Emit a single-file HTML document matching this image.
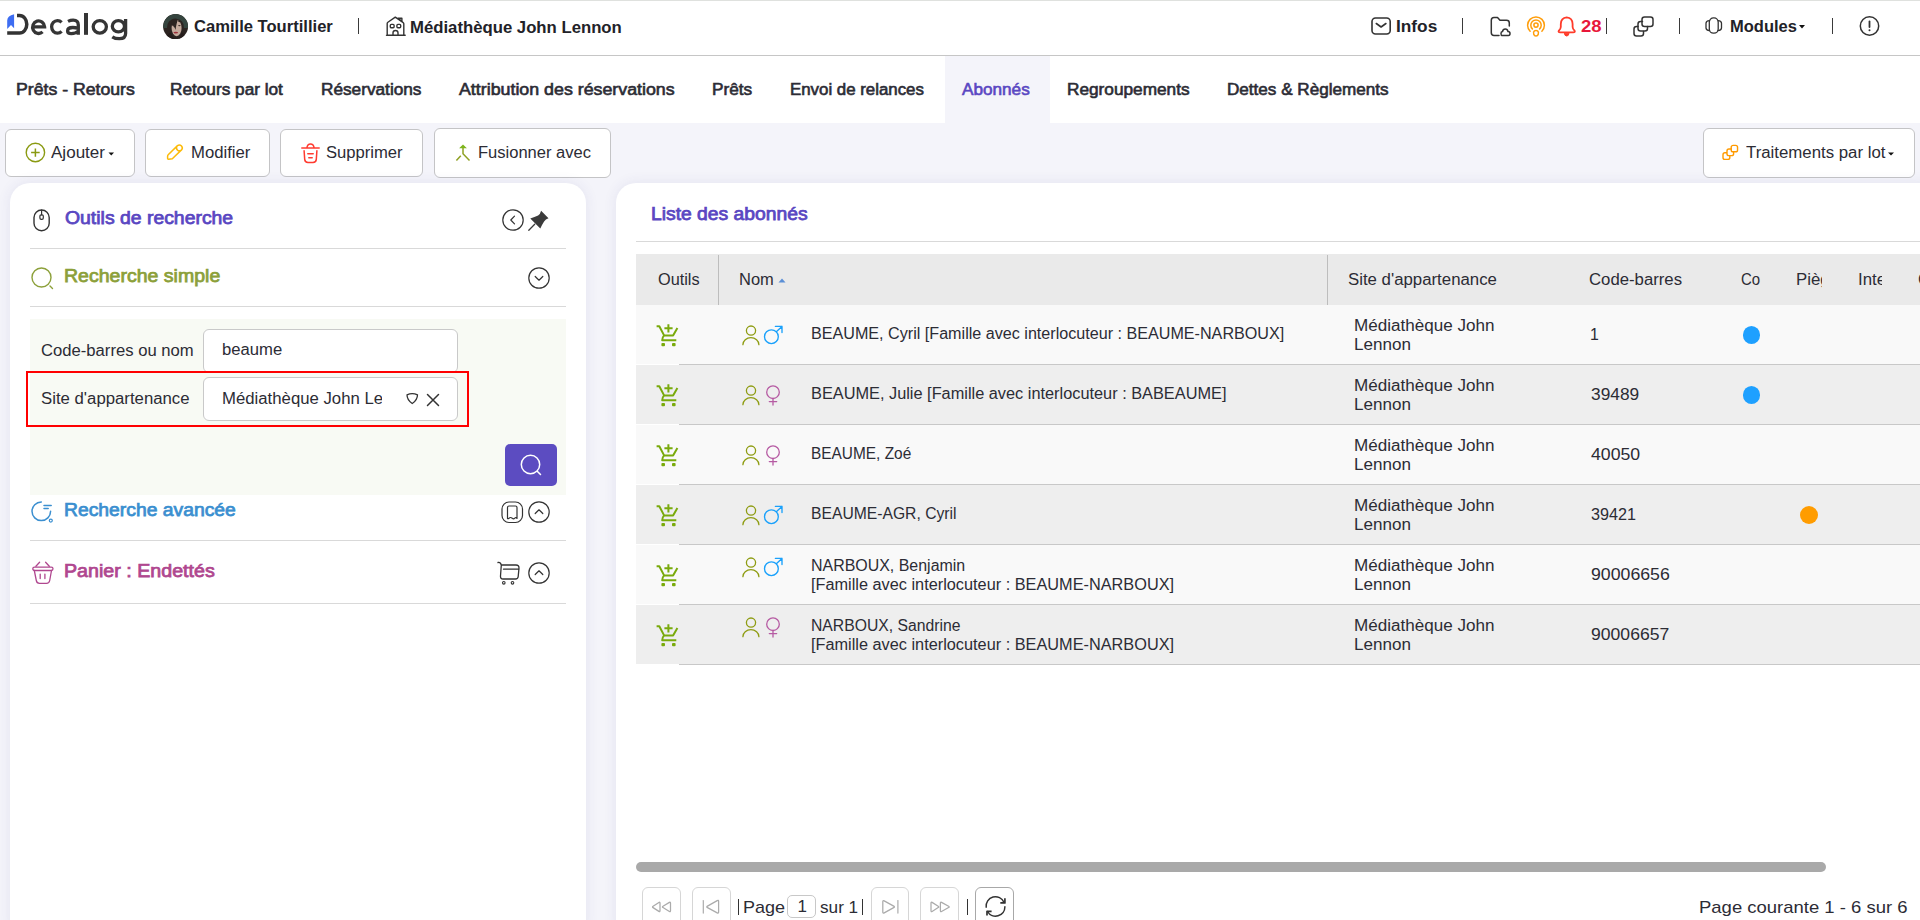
<!DOCTYPE html>
<html><head><meta charset="utf-8"><title>Abonnés</title><style>
*{margin:0;padding:0}
html,body{width:1920px;height:920px;overflow:hidden;background:#fff}
body{position:relative;font-family:"Liberation Sans",sans-serif}
.bx{position:absolute}
.ic{position:absolute;overflow:visible}
.t{position:absolute;white-space:nowrap;line-height:1;transform-origin:0 0}
.clip{position:absolute;overflow:hidden}
.nav{-webkit-text-stroke:0.6px currentColor}
.med{-webkit-text-stroke:0.75px currentColor}
</style></head><body>
<div class="bx" style="left:0px;top:0px;width:1920px;height:1px;background:#dfe1de"></div>
<div class="bx" style="left:0px;top:55px;width:1920px;height:1px;background:#c6c6c6"></div>
<div class="bx" style="left:0px;top:123px;width:1920px;height:797px;background:#f4f4fa"></div>
<div class="bx" style="left:945px;top:56px;width:105px;height:67px;background:#f4f4fa"></div>
<div class="bx" style="left:5px;top:129px;width:130px;height:48px;background:#fff;border:1px solid #c4c4c6;border-radius:6px;box-sizing:border-box"></div>
<div class="bx" style="left:145px;top:129px;width:125px;height:48px;background:#fff;border:1px solid #c4c4c6;border-radius:6px;box-sizing:border-box"></div>
<div class="bx" style="left:280px;top:129px;width:142.5px;height:48px;background:#fff;border:1px solid #c4c4c6;border-radius:6px;box-sizing:border-box"></div>
<div class="bx" style="left:433.5px;top:128px;width:177px;height:50px;background:#fff;border:1px solid #c4c4c6;border-radius:6px;box-sizing:border-box"></div>
<div class="bx" style="left:1702.5px;top:128px;width:212px;height:50px;background:#fff;border:1px solid #c4c4c6;border-radius:6px;box-sizing:border-box"></div>
<div class="bx" style="left:10px;top:183px;width:576px;height:760px;background:#fff;border-radius:20px;box-shadow:0 0 14px rgba(60,60,130,0.09)"></div>
<div class="bx" style="left:616px;top:183px;width:1324px;height:760px;background:#fff;border-radius:20px;box-shadow:0 0 14px rgba(60,60,130,0.09)"></div>
<div class="bx" style="left:30px;top:248px;width:536px;height:1px;background:#d9d9d9"></div>
<div class="bx" style="left:30px;top:306px;width:536px;height:1px;background:#d9d9d9"></div>
<div class="bx" style="left:30px;top:540px;width:536px;height:1px;background:#d9d9d9"></div>
<div class="bx" style="left:30px;top:603px;width:536px;height:1px;background:#d9d9d9"></div>
<div class="bx" style="left:30px;top:319px;width:536px;height:176px;background:#f8faf4"></div>
<div class="bx" style="left:203px;top:329px;width:255px;height:44px;background:#fff;border:1px solid #c9c9c9;border-radius:6px;box-sizing:border-box"></div>
<div class="bx" style="left:203px;top:377px;width:255px;height:44px;background:#fff;border:1px solid #c9c9c9;border-radius:6px;box-sizing:border-box"></div>
<div class="bx" style="left:26px;top:371px;width:443px;height:56px;border:2px solid #ff0000;box-sizing:border-box"></div>
<div class="bx" style="left:505px;top:444px;width:52px;height:42px;background:#5c4cc1;border-radius:5px"></div>
<div class="bx" style="left:636px;top:241px;width:1284px;height:1px;background:#d9d9d9"></div>
<div class="bx" style="left:636px;top:254px;width:1284px;height:51px;background:#eaeaea"></div>
<div class="bx" style="left:718px;top:255px;width:1px;height:50px;background:#bdbdbd"></div>
<div class="bx" style="left:1327px;top:255px;width:1px;height:50px;background:#bdbdbd"></div>
<div class="bx" style="left:636px;top:305px;width:1284px;height:59px;background:#f9f9f9"></div>
<div class="bx" style="left:679px;top:364px;width:1241px;height:1px;background:#c8c8c8"></div>
<div class="bx" style="left:636px;top:365px;width:1284px;height:59px;background:#eeeeee"></div>
<div class="bx" style="left:679px;top:424px;width:1241px;height:1px;background:#c8c8c8"></div>
<div class="bx" style="left:636px;top:425px;width:1284px;height:59px;background:#f9f9f9"></div>
<div class="bx" style="left:679px;top:484px;width:1241px;height:1px;background:#c8c8c8"></div>
<div class="bx" style="left:636px;top:485px;width:1284px;height:59px;background:#eeeeee"></div>
<div class="bx" style="left:679px;top:544px;width:1241px;height:1px;background:#c8c8c8"></div>
<div class="bx" style="left:636px;top:545px;width:1284px;height:59px;background:#f9f9f9"></div>
<div class="bx" style="left:679px;top:604px;width:1241px;height:1px;background:#c8c8c8"></div>
<div class="bx" style="left:636px;top:605px;width:1284px;height:59px;background:#eeeeee"></div>
<div class="bx" style="left:679px;top:664px;width:1241px;height:1px;background:#c8c8c8"></div>
<div class="bx" style="left:1742.7px;top:325.8px;width:17.8px;height:18px;background:#1ea0ff;border-radius:50%"></div>
<div class="bx" style="left:1742.7px;top:385.8px;width:17.8px;height:18px;background:#1ea0ff;border-radius:50%"></div>
<div class="bx" style="left:1800px;top:505.8px;width:18px;height:18px;background:#ff9c00;border-radius:50%"></div>
<div class="bx" style="left:636px;top:862px;width:1190px;height:10px;background:#a9a9a9;border-radius:5px"></div>
<div class="bx" style="left:641.5px;top:887.4px;width:39.2px;height:40px;background:#fff;border:1px solid #d6d6d6;border-radius:6px;box-sizing:border-box"></div>
<div class="bx" style="left:691.5px;top:887.4px;width:39px;height:40px;background:#fff;border:1px solid #d6d6d6;border-radius:6px;box-sizing:border-box"></div>
<div class="bx" style="left:870.7px;top:887.4px;width:38.5px;height:40px;background:#fff;border:1px solid #d6d6d6;border-radius:6px;box-sizing:border-box"></div>
<div class="bx" style="left:920.4px;top:887.4px;width:38.9px;height:40px;background:#fff;border:1px solid #d6d6d6;border-radius:6px;box-sizing:border-box"></div>
<div class="bx" style="left:975.1px;top:887.4px;width:39.3px;height:40px;background:#fff;border:1px solid #a8a8a8;border-radius:6px;box-sizing:border-box"></div>
<div class="bx" style="left:787.3px;top:895.3px;width:29.2px;height:23px;background:#fff;border:1px solid #c8c8c8;border-radius:5px;box-sizing:border-box"></div>
<div class="bx" style="left:737.8px;top:899px;width:1.3px;height:16px;background:#333"></div>
<div class="bx" style="left:861.8px;top:899px;width:1.3px;height:16px;background:#333"></div>
<div class="bx" style="left:967px;top:899px;width:1.3px;height:16px;background:#333"></div>
<div class="bx" style="left:357.7px;top:18px;width:1.3px;height:16px;background:#3a3a3a"></div>
<div class="bx" style="left:1462px;top:18px;width:1.3px;height:16px;background:#3a3a3a"></div>
<div class="bx" style="left:1606px;top:18px;width:1.3px;height:16px;background:#3a3a3a"></div>
<div class="bx" style="left:1678.8px;top:18px;width:1.3px;height:16px;background:#3a3a3a"></div>
<div class="bx" style="left:1831.8px;top:18px;width:1.3px;height:16px;background:#3a3a3a"></div>
<svg class="ic" style="left:0px;top:0px;width:140px;height:50px;" viewBox="0 0 140 50">
<path d="M7.2 28.9 V20.5 Q7.4 15.6 14.1 14.2 V28.2 L11 25.1 Z" fill="#3d6df2"/>
<path d="M17 15.4 H19.5 A7.3 8.85 0 0 1 19.5 33.1 H7.2" fill="none" stroke="#333" stroke-width="3.5"/>
<g fill="none" stroke="#353535" stroke-width="3.3">
<path d="M32.9 26.9 H44.6 A6 6.3 0 1 0 42.6 31.9"/>
<path d="M61.6 22.3 A5.9 6.3 0 1 0 61.6 31.4"/>
<path d="M68 21.4 Q70.5 20.1 73.2 20.1 Q78.3 20.1 78.3 25 V34.8 M78.3 28.3 Q75.5 27.5 72.8 27.5 Q67.6 27.5 67.6 30.9 Q67.6 33.6 71.3 33.6 Q76 33.6 78.3 31"/>
<ellipse cx="99.8" cy="26.85" rx="6.6" ry="6.3"/>
<ellipse cx="118.4" cy="26.2" rx="6.1" ry="5.6"/>
<path d="M125.6 18.9 V33.5 Q125.6 38.7 119.3 38.7 Q115 38.7 112.3 36.8"/>
</g>
<rect x="84" y="13" width="4" height="21.8" fill="#353535"/>
</svg>
<svg class="ic" style="left:162.8px;top:13.9px;width:25.2px;height:25.2px;" viewBox="0 0 25.2 25.2">
<defs><clipPath id="avc"><circle cx="12.6" cy="12.6" r="12.5"/></clipPath></defs>
<g clip-path="url(#avc)">
<rect width="25.2" height="25.2" fill="#2b2320"/>
<path d="M0 14 Q0 0 12.6 0 Q25.2 0 25.2 14 L21 14 Q21 5 12.6 5 Q4 5 4 14Z" fill="#34443e"/>
<ellipse cx="13.6" cy="14" rx="5" ry="8.2" fill="#c4aa9c"/>
<path d="M8.5 6 Q12 3.5 15 5.5 Q13.5 9 12.5 16 Q11.5 12 8.5 11Z" fill="#2b2320"/>
<path d="M15 6 Q17.5 6 19 9 Q17 8 15.5 8Z" fill="#2b2320"/>
<ellipse cx="10.6" cy="11.6" rx="1.3" ry="0.6" fill="#3a2e2a"/><ellipse cx="16.4" cy="11.6" rx="1.3" ry="0.6" fill="#3a2e2a"/>
<ellipse cx="12.8" cy="18.6" rx="2.3" ry="0.85" fill="#9e2f3a"/>
<path d="M3 25 Q6 16 8.6 20 Q10 24 12 25.2Z" fill="#241c1a"/><path d="M22 25 Q20 17 18.5 19 Q17 24 15 25.2Z" fill="#241c1a"/>
</g>
</svg>
<svg class="ic" style="left:385.5px;top:16px;width:20px;height:21px;" viewBox="0 0 20 21"><path d="M1.2 19.1 V7.6 Q1.2 6.8 1.9 6.3 L9.3 1.1 L16.9 6.3 Q17.8 6.9 17.8 7.7 V19.1 M0.5 19.2 H19.2" fill="none" stroke="#333" stroke-width="1.4" stroke-linecap="round" stroke-linejoin="round"/>
<path d="M11.9 2.3 H15.9 V5.2 Z" fill="none" stroke="#333" stroke-width="1.4" stroke-linecap="round" stroke-linejoin="round"/>
<rect x="4.3" y="8.4" width="3.8" height="3.3" rx="1" fill="none" stroke="#333" stroke-width="1.4" stroke-linecap="round" stroke-linejoin="round"/><rect x="10.9" y="8.4" width="3.8" height="3.3" rx="1" fill="none" stroke="#333" stroke-width="1.4" stroke-linecap="round" stroke-linejoin="round"/>
<path d="M7 19.1 V16.8 Q7 14.5 9.5 14.5 Q12 14.5 12 16.8 V19.1" fill="none" stroke="#333" stroke-width="1.4" stroke-linecap="round" stroke-linejoin="round"/></svg>
<svg class="ic" style="left:1370.5px;top:17px;width:21px;height:18px;" viewBox="0 0 21 18"><rect x="1" y="1" width="18.2" height="16" rx="3.5" fill="none" stroke="#333" stroke-width="1.6" stroke-linecap="round" stroke-linejoin="round"/><path d="M5.3 6.5 L10.1 10 L14.9 6.5" fill="none" stroke="#333" stroke-width="1.6" stroke-linecap="round" stroke-linejoin="round"/></svg>
<svg class="ic" style="left:1489.5px;top:15.5px;width:21px;height:21px;" viewBox="0 0 21 21"><path d="M9 19.5 H4 Q1.3 19.5 1.3 16.8 V4.3 Q1.3 1.5 4 1.5 H7.5 L10 4.3 H16.5 Q19.3 4.3 19.3 7 V10" fill="none" stroke="#333" stroke-width="1.5" stroke-linecap="round" stroke-linejoin="round"/><path d="M12 19.5 H18.5 Q20 19.5 20 17.5 Q20 15.5 18 15.5 Q17.5 13 15.3 13 Q13 13 12.5 15.5 Q11 15.7 11 17.5 Q11 19.5 12 19.5Z" fill="none" stroke="#333" stroke-width="1.5" stroke-linecap="round" stroke-linejoin="round"/></svg>
<svg class="ic" style="left:1526px;top:15.5px;width:20px;height:21px;" viewBox="0 0 20 21"><circle cx="10" cy="9.1" r="2.1" fill="none" stroke="#ff9e0c" stroke-width="1.5" stroke-linecap="round" stroke-linejoin="round"/><path d="M6.4 12.9 A5.2 5.2 0 1 1 13.6 12.9 M4.1 15.3 A8.4 8.4 0 1 1 15.9 15.3 M7.8 18.6 Q7 16 8.4 14.9 Q10 13.9 11.6 14.9 Q13 16 12.2 18.6 Q11.7 20 10 20 Q8.3 20 7.8 18.6Z" fill="none" stroke="#ff9e0c" stroke-width="1.5" stroke-linecap="round" stroke-linejoin="round"/></svg>
<svg class="ic" style="left:1556.5px;top:15.5px;width:19px;height:21.5px;" viewBox="0 0 19 21.5"><path d="M9.7 1.3 Q3.9 1.7 3.8 8 V11 Q3.6 13.3 1.8 14.8 Q0.9 16.4 3.2 16.4 H16.2 Q18.5 16.4 17.6 14.8 Q15.8 13.3 15.6 11 V8 Q15.5 1.7 9.7 1.3 Z" fill="none" stroke="#ff3b2a" stroke-width="1.8" stroke-linecap="round" stroke-linejoin="round"/><path d="M7.4 17.2 Q7.6 20 9.7 20 Q11.8 20 12 17.2 Z" fill="#ff3b2a" stroke="#ff3b2a" stroke-width="1"/></svg>
<svg class="ic" style="left:1632.5px;top:15.5px;width:21px;height:21px;" viewBox="0 0 21 21"><rect x="9" y="1" width="11" height="9.5" rx="2.5" fill="none" stroke="#333" stroke-width="1.5" stroke-linecap="round" stroke-linejoin="round"/><path d="M9.5 5.5 H7.5 Q5 5.5 5 8 V12.5 Q5 15 7.5 15 H12 Q14.5 15 14.5 12.5 V10.5" fill="none" stroke="#333" stroke-width="1.5" stroke-linecap="round" stroke-linejoin="round"/><path d="M5 10.5 H3.5 Q1 10.5 1 13 V17.5 Q1 20 3.5 20 H8 Q10.5 20 10.5 17.5 V15.5" fill="none" stroke="#333" stroke-width="1.5" stroke-linecap="round" stroke-linejoin="round"/></svg>
<svg class="ic" style="left:1705.3px;top:17.3px;width:17.5px;height:17.5px;" viewBox="0 0 17.5 17.5"><rect x="4.3" y="0.9" width="8.9" height="15.3" rx="4.2" fill="none" stroke="#333" stroke-width="1.3" stroke-linecap="round" stroke-linejoin="round"/><path d="M4.5 3.7 Q1 4 1 6.3 V11 Q1 13.3 4.5 13.6 M13 3.7 Q16.5 4 16.5 6.3 V11 Q16.5 13.3 13 13.6" fill="none" stroke="#333" stroke-width="1.3" stroke-linecap="round" stroke-linejoin="round"/></svg>
<svg class="ic" style="left:1799px;top:24.8px;width:6px;height:3.5px;" viewBox="0 0 6 3.5"><path d="M0 0 H6 L3 3.5Z" fill="#111"/></svg>
<svg class="ic" style="left:1858.5px;top:16px;width:21px;height:20px;" viewBox="0 0 21 20"><circle cx="10.5" cy="10" r="9.2" fill="none" stroke="#333" stroke-width="1.5" stroke-linecap="round" stroke-linejoin="round"/><path d="M10.5 5.5 V11" fill="none" stroke="#333" stroke-width="1.8" stroke-linecap="round" stroke-linejoin="round"/><circle cx="10.5" cy="14.3" r="1" fill="#333"/></svg>
<svg class="ic" style="left:24.5px;top:142.3px;width:21px;height:21px;" viewBox="0 0 21 21"><circle cx="10.4" cy="10.5" r="9.2" fill="none" stroke="#8a9a12" stroke-width="1.4" stroke-linecap="round" stroke-linejoin="round"/><path d="M10.4 6.4 V14.8 M6.1 10.6 H14.7" fill="none" stroke="#8a9a12" stroke-width="1.5" stroke-linecap="butt" stroke-linejoin="round"/></svg>
<svg class="ic" style="left:105.5px;top:151px;width:9px;height:5px;" viewBox="0 0 9 5"><path d="M2.5 1.5 H8 L5.25 4.5Z" fill="#111"/></svg>
<svg class="ic" style="left:165.7px;top:143.1px;width:18px;height:18px;" viewBox="0 0 18 18"><path d="M2.6 16.2 L6.3 15.7 L15.5 6.9 Q17.2 4.9 15.5 3 Q13.6 1.1 11.5 2.6 L2.2 11.7 Q1.6 12.3 1.6 13.2 V15.2 Q1.6 16.3 2.6 16.2 Z M10.7 3.4 Q9.9 6 11.7 7.3 Q13.1 8.4 15.4 7.2" fill="none" stroke="#fcbb0a" stroke-width="1.5" stroke-linecap="round" stroke-linejoin="round"/></svg>
<svg class="ic" style="left:300.5px;top:142.5px;width:19px;height:21px;" viewBox="0 0 19 21"><path d="M0.8 5 H18.2 M5.9 4.6 Q6.5 1 9.5 1 Q12.5 1 13.1 4.6 M3.1 7.8 L3.7 16.4 Q4 19.5 7 19.5 H12 Q15 19.5 15.3 16.4 L15.9 7.8 M6.8 10.8 H12.2 M7.8 14.7 H11.2" fill="none" stroke="#ff3b30" stroke-width="1.5" stroke-linecap="round" stroke-linejoin="round"/></svg>
<svg class="ic" style="left:455px;top:143.5px;width:16px;height:18px;" viewBox="0 0 16 18"><path d="M8 0.6 L11.9 4.2 H4.1 Z" fill="#7db51c"/><path d="M8 4 V9.8 L14.5 16.6 M5.8 11.8 L1.4 16.6" fill="none" stroke="#8fa123" stroke-width="1.5" stroke-linecap="butt" stroke-linejoin="round"/></svg>
<svg class="ic" style="left:1721.5px;top:143.5px;width:17px;height:17px;" viewBox="0 0 17 17"><rect x="9.2" y="1.4" width="6.35" height="6.4" rx="1.9" fill="none" stroke="#ff9a00" stroke-width="1.4" stroke-linecap="round" stroke-linejoin="round"/><path d="M9.2 5 H6.9 Q5 5 5 6.9 V9.7 Q5 11.6 6.9 11.6 H9.7 Q11.6 11.6 11.6 9.7 V8.2 M5 8.8 H2.9 Q1 8.8 1 10.7 V13.5 Q1 15.4 2.9 15.4 H5.9 Q7.8 15.4 7.8 13.5 V11.9" fill="none" stroke="#ff9a00" stroke-width="1.4" stroke-linecap="round" stroke-linejoin="round"/></svg>
<svg class="ic" style="left:1886.5px;top:151px;width:8px;height:5px;" viewBox="0 0 8 5"><path d="M1 1.5 H7 L4 4.5Z" fill="#111"/></svg>
<svg class="ic" style="left:33px;top:208.5px;width:17px;height:22.5px;" viewBox="0 0 17 22.5"><rect x="1" y="1" width="15.2" height="20.8" rx="7.6" fill="none" stroke="#333" stroke-width="1.4" stroke-linecap="round" stroke-linejoin="round"/><rect x="6.9" y="5.8" width="3.4" height="4.6" rx="1.3" fill="none" stroke="#333" stroke-width="1.2" stroke-linecap="round" stroke-linejoin="round"/><path d="M8.6 1 V5.8" fill="none" stroke="#333" stroke-width="1.2" stroke-linecap="round" stroke-linejoin="round"/></svg>
<svg class="ic" style="left:501.8px;top:208.8px;width:22px;height:22px;" viewBox="0 0 22 22"><circle cx="11" cy="11" r="10.2" fill="none" stroke="#333" stroke-width="1.2" stroke-linecap="round" stroke-linejoin="round"/><path d="M12.5 7.2 L8.8 11 L12.5 14.8" fill="none" stroke="#333" stroke-width="1.2" stroke-linecap="round" stroke-linejoin="round"/></svg>
<svg class="ic" style="left:527.5px;top:210px;width:21.5px;height:21.5px;" viewBox="0 0 21.5 21.5"><path d="M13.1 0.7 L20.5 8.2 Q17.6 9.2 16.1 11.4 Q14.4 14 12.3 18.4 L2.3 8.5 Q6.6 6.9 10.1 5.5 Q12.2 4.3 13.1 0.7 Z" fill="#3b3b3b"/><path d="M6.7 14.2 L0.8 20.3" fill="none" stroke="#3b3b3b" stroke-width="1.3" stroke-linecap="round" stroke-linejoin="round"/></svg>
<svg class="ic" style="left:30.5px;top:266.5px;width:23px;height:23px;" viewBox="0 0 23 23"><circle cx="10.5" cy="10.5" r="9.5" fill="none" stroke="#8ca03a" stroke-width="1.4" stroke-linecap="round" stroke-linejoin="round"/><path d="M19 19 L21.5 21.5" fill="none" stroke="#8ca03a" stroke-width="1.4" stroke-linecap="round" stroke-linejoin="round"/></svg>
<svg class="ic" style="left:527.5px;top:267.2px;width:22px;height:22px;" viewBox="0 0 22 22"><circle cx="11" cy="11" r="10.2" fill="none" stroke="#333" stroke-width="1.2" stroke-linecap="round" stroke-linejoin="round"/><path d="M7.2 9.5 L11 13.2 L14.8 9.5" fill="none" stroke="#333" stroke-width="1.2" stroke-linecap="round" stroke-linejoin="round"/></svg>
<svg class="ic" style="left:520px;top:454px;width:22px;height:22px;" viewBox="0 0 22 22"><circle cx="10.5" cy="10.5" r="9.2" fill="none" stroke="#fff" stroke-width="1.5" stroke-linecap="round" stroke-linejoin="round"/><path d="M17.5 17.5 L20.5 20.5" fill="none" stroke="#fff" stroke-width="1.5" stroke-linecap="round" stroke-linejoin="round"/></svg>
<svg class="ic" style="left:404.5px;top:392px;width:15px;height:13px;" viewBox="0 0 15 13"><path d="M2 2.8 Q7.25 0.5 12.5 2.8 Q12.5 8 7.25 11.5 Q2 8 2 2.8Z" fill="none" stroke="#333" stroke-width="1.3" stroke-linecap="round" stroke-linejoin="round"/></svg>
<svg class="ic" style="left:426px;top:392.5px;width:14px;height:14px;" viewBox="0 0 14 14"><path d="M1.5 1.5 L12.5 12.5 M12.5 1.5 L1.5 12.5" fill="none" stroke="#333" stroke-width="1.5" stroke-linecap="round" stroke-linejoin="round"/></svg>
<svg class="ic" style="left:30.5px;top:500.5px;width:23px;height:23px;" viewBox="0 0 23 23"><path d="M10.3 1 A9.3 9.3 0 1 0 19.6 10.3" fill="none" stroke="#3b8fd0" stroke-width="1.5" stroke-linecap="round" stroke-linejoin="round"/><path d="M13 4.5 H20.2 M13 7.4 H17.2" fill="none" stroke="#3b8fd0" stroke-width="1.5" stroke-linecap="round" stroke-linejoin="round"/><circle cx="19.8" cy="19.6" r="1.5" fill="none" stroke="#3b8fd0" stroke-width="1.2" stroke-linecap="round" stroke-linejoin="round"/></svg>
<svg class="ic" style="left:500.5px;top:501px;width:22.5px;height:22.5px;" viewBox="0 0 22.5 22.5"><rect x="1" y="1" width="20.5" height="20.5" rx="7" fill="none" stroke="#333" stroke-width="1.2" stroke-linecap="round" stroke-linejoin="round"/><path d="M6.5 17.5 V6.5 Q6.5 5 8 5 H14.5 Q16 5 16 6.5 V17.5 Q15 16 13.8 17.2 Q12.5 18.5 11.2 17.2 Q9.5 15.8 8 17.2 Q7 18 6.5 17.5Z" fill="none" stroke="#333" stroke-width="1.2" stroke-linecap="round" stroke-linejoin="round"/></svg>
<svg class="ic" style="left:527.5px;top:501.2px;width:22px;height:22px;" viewBox="0 0 22 22"><circle cx="11" cy="11" r="10.2" fill="none" stroke="#333" stroke-width="1.2" stroke-linecap="round" stroke-linejoin="round"/><path d="M7.2 12.5 L11 8.8 L14.8 12.5" fill="none" stroke="#333" stroke-width="1.2" stroke-linecap="round" stroke-linejoin="round"/></svg>
<svg class="ic" style="left:30.5px;top:561px;width:23px;height:23.5px;" viewBox="0 0 23 23.5"><rect x="1.8" y="6.1" width="20.2" height="3.4" rx="1.7" fill="none" stroke="#b0478f" stroke-width="1.3" stroke-linecap="round" stroke-linejoin="round"/><path d="M3.3 9.5 L5.3 19.5 Q5.8 22.3 8.5 22.3 H15.5 Q18.2 22.3 18.7 19.5 L20.5 9.5 M8.6 1.3 L4.9 5.3 M14.6 1.3 L18.3 5.3 M9.2 13.1 V17.6 M13.9 13.1 V17.6" fill="none" stroke="#b0478f" stroke-width="1.3" stroke-linecap="round" stroke-linejoin="round"/></svg>
<svg class="ic" style="left:497px;top:560.5px;width:23.5px;height:24px;" viewBox="0 0 23.5 24"><path d="M1 1.5 Q3.5 1 4.3 4 L3.5 15 Q3.3 18 6 18 H18.5 Q21 18 21.2 15.5 L22 7 Q22 4 19 4 H4.3 M6.5 8.2 H22" fill="none" stroke="#333" stroke-width="1.3" stroke-linecap="round" stroke-linejoin="round"/><circle cx="6.8" cy="21.8" r="1.3" fill="none" stroke="#333" stroke-width="1.1" stroke-linecap="round" stroke-linejoin="round"/><circle cx="15.5" cy="21.8" r="1.3" fill="none" stroke="#333" stroke-width="1.1" stroke-linecap="round" stroke-linejoin="round"/></svg>
<svg class="ic" style="left:527.5px;top:561.5px;width:22px;height:22px;" viewBox="0 0 22 22"><circle cx="11" cy="11" r="10.2" fill="none" stroke="#333" stroke-width="1.2" stroke-linecap="round" stroke-linejoin="round"/><path d="M7.2 12.5 L11 8.8 L14.8 12.5" fill="none" stroke="#333" stroke-width="1.2" stroke-linecap="round" stroke-linejoin="round"/></svg>
<svg class="ic" style="left:777.5px;top:277.5px;width:8px;height:5px;" viewBox="0 0 8 5"><path d="M0.5 4.5 L4 0.5 L7.5 4.5Z" fill="#5b8fd6"/></svg>
<svg class="ic" style="left:655.5px;top:323px;width:23px;height:23px;" viewBox="0 0 23 23"><path d="M0.6 3.2 H3.3 L8.1 12.4 H17.1 L21.4 5 M8.1 12.4 Q6.3 14.3 6.2 17.3 H20.3" fill="none" stroke="#79aa0c" stroke-width="2.0" stroke-linecap="butt" stroke-linejoin="round"/><path d="M12.4 1.2 V9.6 M8.4 5.3 H16.6" fill="none" stroke="#79aa0c" stroke-width="2.0" stroke-linecap="butt" stroke-linejoin="round"/><rect x="5.4" y="20" width="3.6" height="3.2" rx="1" fill="#79aa0c"/><rect x="16" y="20" width="3.6" height="3.2" rx="1" fill="#79aa0c"/></svg>
<svg class="ic" style="left:742px;top:324.8px;width:17.5px;height:20.5px;" viewBox="0 0 17.5 20.5"><circle cx="9" cy="5.6" r="4.6" fill="none" stroke="#8e9c12" stroke-width="1.3" stroke-linecap="round" stroke-linejoin="round"/><path d="M0.9 19.7 A8 7 0 0 1 16.9 19.7" fill="none" stroke="#8e9c12" stroke-width="1.3" stroke-linecap="round" stroke-linejoin="round"/></svg>
<svg class="ic" style="left:763px;top:324.8px;width:20px;height:20.5px;" viewBox="0 0 20 20.5"><circle cx="8.4" cy="11.7" r="6.9" fill="none" stroke="#1aa1fb" stroke-width="1.35" stroke-linecap="round" stroke-linejoin="round"/><path d="M13.3 6.8 L19 1.4 M12.4 1.4 H19 V7.6" fill="none" stroke="#1aa1fb" stroke-width="1.35" stroke-linecap="round" stroke-linejoin="round"/></svg>
<svg class="ic" style="left:655.5px;top:383px;width:23px;height:23px;" viewBox="0 0 23 23"><path d="M0.6 3.2 H3.3 L8.1 12.4 H17.1 L21.4 5 M8.1 12.4 Q6.3 14.3 6.2 17.3 H20.3" fill="none" stroke="#79aa0c" stroke-width="2.0" stroke-linecap="butt" stroke-linejoin="round"/><path d="M12.4 1.2 V9.6 M8.4 5.3 H16.6" fill="none" stroke="#79aa0c" stroke-width="2.0" stroke-linecap="butt" stroke-linejoin="round"/><rect x="5.4" y="20" width="3.6" height="3.2" rx="1" fill="#79aa0c"/><rect x="16" y="20" width="3.6" height="3.2" rx="1" fill="#79aa0c"/></svg>
<svg class="ic" style="left:742px;top:384.8px;width:17.5px;height:20.5px;" viewBox="0 0 17.5 20.5"><circle cx="9" cy="5.6" r="4.6" fill="none" stroke="#8e9c12" stroke-width="1.3" stroke-linecap="round" stroke-linejoin="round"/><path d="M0.9 19.7 A8 7 0 0 1 16.9 19.7" fill="none" stroke="#8e9c12" stroke-width="1.3" stroke-linecap="round" stroke-linejoin="round"/></svg>
<svg class="ic" style="left:766px;top:384.8px;width:14px;height:20.5px;" viewBox="0 0 14 20.5"><circle cx="7" cy="7.2" r="6.3" fill="none" stroke="#b65ba3" stroke-width="1.3" stroke-linecap="round" stroke-linejoin="round"/><path d="M7 13.5 V20 M3.3 16.6 H10.7" fill="none" stroke="#b65ba3" stroke-width="1.3" stroke-linecap="round" stroke-linejoin="round"/></svg>
<svg class="ic" style="left:655.5px;top:443px;width:23px;height:23px;" viewBox="0 0 23 23"><path d="M0.6 3.2 H3.3 L8.1 12.4 H17.1 L21.4 5 M8.1 12.4 Q6.3 14.3 6.2 17.3 H20.3" fill="none" stroke="#79aa0c" stroke-width="2.0" stroke-linecap="butt" stroke-linejoin="round"/><path d="M12.4 1.2 V9.6 M8.4 5.3 H16.6" fill="none" stroke="#79aa0c" stroke-width="2.0" stroke-linecap="butt" stroke-linejoin="round"/><rect x="5.4" y="20" width="3.6" height="3.2" rx="1" fill="#79aa0c"/><rect x="16" y="20" width="3.6" height="3.2" rx="1" fill="#79aa0c"/></svg>
<svg class="ic" style="left:742px;top:444.8px;width:17.5px;height:20.5px;" viewBox="0 0 17.5 20.5"><circle cx="9" cy="5.6" r="4.6" fill="none" stroke="#8e9c12" stroke-width="1.3" stroke-linecap="round" stroke-linejoin="round"/><path d="M0.9 19.7 A8 7 0 0 1 16.9 19.7" fill="none" stroke="#8e9c12" stroke-width="1.3" stroke-linecap="round" stroke-linejoin="round"/></svg>
<svg class="ic" style="left:766px;top:444.8px;width:14px;height:20.5px;" viewBox="0 0 14 20.5"><circle cx="7" cy="7.2" r="6.3" fill="none" stroke="#b65ba3" stroke-width="1.3" stroke-linecap="round" stroke-linejoin="round"/><path d="M7 13.5 V20 M3.3 16.6 H10.7" fill="none" stroke="#b65ba3" stroke-width="1.3" stroke-linecap="round" stroke-linejoin="round"/></svg>
<svg class="ic" style="left:655.5px;top:503px;width:23px;height:23px;" viewBox="0 0 23 23"><path d="M0.6 3.2 H3.3 L8.1 12.4 H17.1 L21.4 5 M8.1 12.4 Q6.3 14.3 6.2 17.3 H20.3" fill="none" stroke="#79aa0c" stroke-width="2.0" stroke-linecap="butt" stroke-linejoin="round"/><path d="M12.4 1.2 V9.6 M8.4 5.3 H16.6" fill="none" stroke="#79aa0c" stroke-width="2.0" stroke-linecap="butt" stroke-linejoin="round"/><rect x="5.4" y="20" width="3.6" height="3.2" rx="1" fill="#79aa0c"/><rect x="16" y="20" width="3.6" height="3.2" rx="1" fill="#79aa0c"/></svg>
<svg class="ic" style="left:742px;top:504.8px;width:17.5px;height:20.5px;" viewBox="0 0 17.5 20.5"><circle cx="9" cy="5.6" r="4.6" fill="none" stroke="#8e9c12" stroke-width="1.3" stroke-linecap="round" stroke-linejoin="round"/><path d="M0.9 19.7 A8 7 0 0 1 16.9 19.7" fill="none" stroke="#8e9c12" stroke-width="1.3" stroke-linecap="round" stroke-linejoin="round"/></svg>
<svg class="ic" style="left:763px;top:504.8px;width:20px;height:20.5px;" viewBox="0 0 20 20.5"><circle cx="8.4" cy="11.7" r="6.9" fill="none" stroke="#1aa1fb" stroke-width="1.35" stroke-linecap="round" stroke-linejoin="round"/><path d="M13.3 6.8 L19 1.4 M12.4 1.4 H19 V7.6" fill="none" stroke="#1aa1fb" stroke-width="1.35" stroke-linecap="round" stroke-linejoin="round"/></svg>
<svg class="ic" style="left:655.5px;top:563px;width:23px;height:23px;" viewBox="0 0 23 23"><path d="M0.6 3.2 H3.3 L8.1 12.4 H17.1 L21.4 5 M8.1 12.4 Q6.3 14.3 6.2 17.3 H20.3" fill="none" stroke="#79aa0c" stroke-width="2.0" stroke-linecap="butt" stroke-linejoin="round"/><path d="M12.4 1.2 V9.6 M8.4 5.3 H16.6" fill="none" stroke="#79aa0c" stroke-width="2.0" stroke-linecap="butt" stroke-linejoin="round"/><rect x="5.4" y="20" width="3.6" height="3.2" rx="1" fill="#79aa0c"/><rect x="16" y="20" width="3.6" height="3.2" rx="1" fill="#79aa0c"/></svg>
<svg class="ic" style="left:742px;top:557.2px;width:17.5px;height:20.5px;" viewBox="0 0 17.5 20.5"><circle cx="9" cy="5.6" r="4.6" fill="none" stroke="#8e9c12" stroke-width="1.3" stroke-linecap="round" stroke-linejoin="round"/><path d="M0.9 19.7 A8 7 0 0 1 16.9 19.7" fill="none" stroke="#8e9c12" stroke-width="1.3" stroke-linecap="round" stroke-linejoin="round"/></svg>
<svg class="ic" style="left:763px;top:557.2px;width:20px;height:20.5px;" viewBox="0 0 20 20.5"><circle cx="8.4" cy="11.7" r="6.9" fill="none" stroke="#1aa1fb" stroke-width="1.35" stroke-linecap="round" stroke-linejoin="round"/><path d="M13.3 6.8 L19 1.4 M12.4 1.4 H19 V7.6" fill="none" stroke="#1aa1fb" stroke-width="1.35" stroke-linecap="round" stroke-linejoin="round"/></svg>
<svg class="ic" style="left:655.5px;top:623px;width:23px;height:23px;" viewBox="0 0 23 23"><path d="M0.6 3.2 H3.3 L8.1 12.4 H17.1 L21.4 5 M8.1 12.4 Q6.3 14.3 6.2 17.3 H20.3" fill="none" stroke="#79aa0c" stroke-width="2.0" stroke-linecap="butt" stroke-linejoin="round"/><path d="M12.4 1.2 V9.6 M8.4 5.3 H16.6" fill="none" stroke="#79aa0c" stroke-width="2.0" stroke-linecap="butt" stroke-linejoin="round"/><rect x="5.4" y="20" width="3.6" height="3.2" rx="1" fill="#79aa0c"/><rect x="16" y="20" width="3.6" height="3.2" rx="1" fill="#79aa0c"/></svg>
<svg class="ic" style="left:742px;top:617.2px;width:17.5px;height:20.5px;" viewBox="0 0 17.5 20.5"><circle cx="9" cy="5.6" r="4.6" fill="none" stroke="#8e9c12" stroke-width="1.3" stroke-linecap="round" stroke-linejoin="round"/><path d="M0.9 19.7 A8 7 0 0 1 16.9 19.7" fill="none" stroke="#8e9c12" stroke-width="1.3" stroke-linecap="round" stroke-linejoin="round"/></svg>
<svg class="ic" style="left:766px;top:617.2px;width:14px;height:20.5px;" viewBox="0 0 14 20.5"><circle cx="7" cy="7.2" r="6.3" fill="none" stroke="#b65ba3" stroke-width="1.3" stroke-linecap="round" stroke-linejoin="round"/><path d="M7 13.5 V20 M3.3 16.6 H10.7" fill="none" stroke="#b65ba3" stroke-width="1.3" stroke-linecap="round" stroke-linejoin="round"/></svg>
<svg class="ic" style="left:650.5px;top:900px;width:21px;height:14px;" viewBox="0 0 21 14"><path d="M2.09 7.61 Q1.00 6.90 2.09 6.19 L7.91 2.41 Q9.00 1.70 9.00 3.00 L9.00 10.80 Q9.00 12.10 7.91 11.39 Z M12.01 7.57 Q10.90 6.90 12.01 6.23 L18.39 2.37 Q19.50 1.70 19.50 3.00 L19.50 10.80 Q19.50 12.10 18.39 11.43 Z" fill="none" stroke="#ababab" stroke-width="1.25" stroke-linecap="round" stroke-linejoin="round"/></svg>
<svg class="ic" style="left:701px;top:899px;width:20px;height:16px;" viewBox="0 0 20 16"><path d="M2.3 1.6 V14.1" fill="none" stroke="#ababab" stroke-width="1.2" stroke-linecap="round" stroke-linejoin="round"/><path d="M6.51 8.66 Q5.10 7.90 6.49 7.11 L16.21 1.59 Q17.60 0.80 17.60 2.40 L17.60 13.00 Q17.60 14.60 16.19 13.84 Z" fill="none" stroke="#ababab" stroke-width="1.25" stroke-linecap="round" stroke-linejoin="round"/></svg>
<svg class="ic" style="left:880.5px;top:899px;width:20px;height:16px;" viewBox="0 0 20 16"><path d="M16.9 1.6 V14.1" fill="none" stroke="#ababab" stroke-width="1.2" stroke-linecap="round" stroke-linejoin="round"/><path d="M1.80 2.70 Q1.80 1.10 3.20 1.87 L12.70 7.13 Q14.10 7.90 12.69 8.67 L3.21 13.83 Q1.80 14.60 1.80 13.00 Z" fill="none" stroke="#ababab" stroke-width="1.25" stroke-linecap="round" stroke-linejoin="round"/></svg>
<svg class="ic" style="left:929.5px;top:900px;width:21px;height:14px;" viewBox="0 0 21 14"><path d="M1.00 3.00 Q1.00 1.70 2.10 2.39 L8.20 6.21 Q9.30 6.90 8.20 7.59 L2.10 11.41 Q1.00 12.10 1.00 10.80 Z M10.40 3.00 Q10.40 1.70 11.54 2.33 L18.61 6.27 Q19.75 6.90 18.61 7.53 L11.54 11.47 Q10.40 12.10 10.40 10.80 Z" fill="none" stroke="#ababab" stroke-width="1.25" stroke-linecap="round" stroke-linejoin="round"/></svg>
<svg class="ic" style="left:984.5px;top:897px;width:21px;height:20px;" viewBox="0 0 21 20"><path d="M1.2 10.2 A9.3 9.3 0 0 1 19 5.4 M19.9 9.8 A9.3 9.3 0 0 1 2.6 14.6" fill="none" stroke="#333" stroke-width="1.5" stroke-linecap="round" stroke-linejoin="round"/><path d="M19.9 1.3 V5.9 H15.3 M2 18.4 V14.3 H6.6" fill="none" stroke="#333" stroke-width="1.7" stroke-linecap="butt" stroke-linejoin="round"/></svg>
<div class="t" id="h_user" style="left:193.60px;top:18.03px;font-size:16.50px;color:#222228;font-weight:700;transform:scaleX(1.0049);">Camille Tourtillier</div>
<div class="t" id="h_site" style="left:410.29px;top:19.03px;font-size:16.50px;color:#222228;font-weight:700;transform:scaleX(1.0134);">Médiathèque John Lennon</div>
<div class="t" id="h_infos" style="left:1395.95px;top:17.93px;font-size:16.50px;color:#222228;font-weight:700;transform:scaleX(1.0461);">Infos</div>
<div class="t" id="h_28" style="left:1580.60px;top:17.63px;font-size:16.50px;color:#e8173a;font-weight:700;transform:scaleX(1.1223);">28</div>
<div class="t" id="h_modules" style="left:1730.00px;top:17.83px;font-size:16.50px;color:#222228;font-weight:700;">Modules</div>
<div class="t nav" id="nav0" style="left:15.80px;top:81.56px;font-size:16.00px;color:#2c2c35;transform:scaleX(1.1042);">Prêts - Retours</div>
<div class="t nav" id="nav1" style="left:170.32px;top:81.56px;font-size:16.00px;color:#2c2c35;transform:scaleX(1.0758);">Retours par lot</div>
<div class="t nav" id="nav2" style="left:320.82px;top:81.56px;font-size:16.00px;color:#2c2c35;transform:scaleX(1.0761);">Réservations</div>
<div class="t nav" id="nav3" style="left:459.40px;top:81.56px;font-size:16.00px;color:#2c2c35;transform:scaleX(1.1124);">Attribution des réservations</div>
<div class="t nav" id="nav4" style="left:712.42px;top:81.56px;font-size:16.00px;color:#2c2c35;transform:scaleX(1.0761);">Prêts</div>
<div class="t nav" id="nav5" style="left:789.85px;top:81.56px;font-size:16.00px;color:#2c2c35;transform:scaleX(1.0527);">Envoi de relances</div>
<div class="t nav" id="nav6" style="left:961.60px;top:81.56px;font-size:16.00px;color:#5a47c2;transform:scaleX(1.0720);">Abonnés</div>
<div class="t nav" id="nav7" style="left:1066.72px;top:81.56px;font-size:16.00px;color:#2c2c35;transform:scaleX(1.0768);">Regroupements</div>
<div class="t nav" id="nav8" style="left:1226.53px;top:81.56px;font-size:16.00px;color:#2c2c35;transform:scaleX(1.0688);">Dettes &amp; Règlements</div>
<div class="t" id="b_aj" style="left:51.30px;top:144.76px;font-size:16.00px;color:#2c2c35;transform:scaleX(1.0649);">Ajouter</div>
<div class="t" id="b_mod" style="left:190.96px;top:144.76px;font-size:16.00px;color:#2c2c35;transform:scaleX(1.0431);">Modifier</div>
<div class="t" id="b_sup" style="left:326.10px;top:144.66px;font-size:16.00px;color:#2c2c35;transform:scaleX(1.0379);">Supprimer</div>
<div class="t" id="b_fus" style="left:478.27px;top:144.66px;font-size:16.00px;color:#2c2c35;transform:scaleX(1.0333);">Fusionner avec</div>
<div class="t" id="b_tr" style="left:1745.80px;top:144.76px;font-size:16.00px;color:#2c2c35;transform:scaleX(1.0499);">Traitements par lot</div>
<div class="t med" id="l_outils" style="left:65.00px;top:209.79px;font-size:17.50px;color:#5a47c2;transform:scaleX(1.1082);">Outils de recherche</div>
<div class="t med" id="l_simple" style="left:63.88px;top:267.79px;font-size:17.50px;color:#8ca03a;transform:scaleX(1.1157);">Recherche simple</div>
<div class="t" id="l_cb" style="left:40.50px;top:342.63px;font-size:15.80px;color:#2c2c35;transform:scaleX(1.0538);">Code-barres ou nom</div>
<div class="t" id="l_beaume" style="left:221.54px;top:342.33px;font-size:15.80px;color:#2c2c35;transform:scaleX(1.0550);">beaume</div>
<div class="t" id="l_site" style="left:40.50px;top:390.63px;font-size:15.80px;color:#2c2c35;transform:scaleX(1.0610);">Site d'appartenance</div>
<div class="clip" style="left:221.54px;top:388.63px;width:160.00px;height:23px"><div class="t" id="l_med" style="left:0;top:2px;font-size:15.80px;color:#2c2c35;transform:scaleX(1.0600);">Médiathèque John Lennon</div></div>
<div class="t med" id="l_avance" style="left:63.90px;top:501.79px;font-size:17.50px;color:#3b8fd0;transform:scaleX(1.1035);">Recherche avancée</div>
<div class="t med" id="l_panier" style="left:63.88px;top:562.79px;font-size:17.50px;color:#b0478f;transform:scaleX(1.1232);">Panier : Endettés</div>
<div class="t med" id="r_liste" style="left:650.90px;top:205.59px;font-size:17.50px;color:#5a47c2;transform:scaleX(1.1024);">Liste des abonnés</div>
<div class="t" id="th_outils" style="left:657.70px;top:272.26px;font-size:16.00px;color:#2c2c35;transform:scaleX(1.0172);">Outils</div>
<div class="t" id="th_nom" style="left:738.57px;top:272.26px;font-size:16.00px;color:#2c2c35;transform:scaleX(1.0292);">Nom</div>
<div class="t" id="th_site" style="left:1348.00px;top:272.06px;font-size:16.00px;color:#2c2c35;transform:scaleX(1.0498);">Site d'appartenance</div>
<div class="t" id="th_cb" style="left:1589.00px;top:272.06px;font-size:16.00px;color:#2c2c35;transform:scaleX(1.0458);">Code-barres</div>
<div class="t" id="th_co" style="left:1741.30px;top:272.06px;font-size:16.00px;color:#2c2c35;transform:scaleX(0.9341);">Co</div>
<div class="clip" style="left:1795.95px;top:270.06px;width:26.40px;height:24px"><div class="t" id="th_pieg" style="left:0;top:2px;font-size:16.00px;color:#2c2c35;transform:scaleX(1.0500);">Pièges</div></div>
<div class="clip" style="left:1857.75px;top:270.06px;width:24.30px;height:24px"><div class="t" id="th_inte" style="left:0;top:2px;font-size:16.00px;color:#2c2c35;transform:scaleX(1.0500);">Interlocuteur</div></div>
<div class="clip" style="left:1918.00px;top:270.06px;width:2.00px;height:24px"><div class="t" id="th_c" style="left:0;top:2px;font-size:16.00px;color:#2c2c35;transform:scaleX(1.0500);">C</div></div>
<div class="t" id="r0_n0" style="left:810.98px;top:325.63px;font-size:15.80px;color:#2c2c35;transform:scaleX(1.0210);">BEAUME, Cyril [Famille avec interlocuteur : BEAUME-NARBOUX]</div>
<div class="t" id="r0_s0" style="left:1354.32px;top:318.03px;font-size:15.80px;color:#2c2c35;transform:scaleX(1.0811);">Médiathèque John</div>
<div class="t" id="r0_s1" style="left:1354.32px;top:337.33px;font-size:15.80px;color:#2c2c35;transform:scaleX(1.0800);">Lennon</div>
<div class="t" id="r0_cb" style="left:1590.00px;top:327.13px;font-size:15.80px;color:#2c2c35;">1</div>
<div class="t" id="r1_n0" style="left:810.97px;top:385.63px;font-size:15.80px;color:#2c2c35;transform:scaleX(1.0332);">BEAUME, Julie [Famille avec interlocuteur : BABEAUME]</div>
<div class="t" id="r1_s0" style="left:1354.32px;top:378.03px;font-size:15.80px;color:#2c2c35;transform:scaleX(1.0811);">Médiathèque John</div>
<div class="t" id="r1_s1" style="left:1354.32px;top:397.33px;font-size:15.80px;color:#2c2c35;transform:scaleX(1.0800);">Lennon</div>
<div class="t" id="r1_cb" style="left:1591.00px;top:387.13px;font-size:15.80px;color:#2c2c35;transform:scaleX(1.0965);">39489</div>
<div class="t" id="r2_n0" style="left:811.02px;top:445.63px;font-size:15.80px;color:#2c2c35;transform:scaleX(0.9762);">BEAUME, Zoé</div>
<div class="t" id="r2_s0" style="left:1354.32px;top:438.03px;font-size:15.80px;color:#2c2c35;transform:scaleX(1.0811);">Médiathèque John</div>
<div class="t" id="r2_s1" style="left:1354.32px;top:457.33px;font-size:15.80px;color:#2c2c35;transform:scaleX(1.0800);">Lennon</div>
<div class="t" id="r2_cb" style="left:1591.00px;top:447.13px;font-size:15.80px;color:#2c2c35;transform:scaleX(1.1191);">40050</div>
<div class="t" id="r3_n0" style="left:811.01px;top:505.63px;font-size:15.80px;color:#2c2c35;transform:scaleX(0.9927);">BEAUME-AGR, Cyril</div>
<div class="t" id="r3_s0" style="left:1354.32px;top:498.03px;font-size:15.80px;color:#2c2c35;transform:scaleX(1.0811);">Médiathèque John</div>
<div class="t" id="r3_s1" style="left:1354.32px;top:517.33px;font-size:15.80px;color:#2c2c35;transform:scaleX(1.0800);">Lennon</div>
<div class="t" id="r3_cb" style="left:1591.00px;top:507.13px;font-size:15.80px;color:#2c2c35;transform:scaleX(1.0240);">39421</div>
<div class="t" id="r4_n0" style="left:810.99px;top:557.83px;font-size:15.80px;color:#2c2c35;transform:scaleX(1.0095);">NARBOUX, Benjamin</div>
<div class="t" id="r4_n1" style="left:810.97px;top:576.83px;font-size:15.80px;color:#2c2c35;transform:scaleX(1.0313);">[Famille avec interlocuteur : BEAUME-NARBOUX]</div>
<div class="t" id="r4_s0" style="left:1354.32px;top:558.03px;font-size:15.80px;color:#2c2c35;transform:scaleX(1.0811);">Médiathèque John</div>
<div class="t" id="r4_s1" style="left:1354.32px;top:577.33px;font-size:15.80px;color:#2c2c35;transform:scaleX(1.0800);">Lennon</div>
<div class="t" id="r4_cb" style="left:1591.00px;top:567.13px;font-size:15.80px;color:#2c2c35;transform:scaleX(1.1208);">90006656</div>
<div class="t" id="r5_n0" style="left:811.00px;top:617.83px;font-size:15.80px;color:#2c2c35;transform:scaleX(0.9957);">NARBOUX, Sandrine</div>
<div class="t" id="r5_n1" style="left:810.97px;top:636.83px;font-size:15.80px;color:#2c2c35;transform:scaleX(1.0313);">[Famille avec interlocuteur : BEAUME-NARBOUX]</div>
<div class="t" id="r5_s0" style="left:1354.32px;top:618.03px;font-size:15.80px;color:#2c2c35;transform:scaleX(1.0811);">Médiathèque John</div>
<div class="t" id="r5_s1" style="left:1354.32px;top:637.33px;font-size:15.80px;color:#2c2c35;transform:scaleX(1.0800);">Lennon</div>
<div class="t" id="r5_cb" style="left:1591.00px;top:627.13px;font-size:15.80px;color:#2c2c35;transform:scaleX(1.1137);">90006657</div>
<div class="t" id="p_page" style="left:742.74px;top:898.91px;font-size:17.00px;color:#2c2c35;transform:scaleX(1.0589);">Page</div>
<div class="t" id="p_1" style="left:797.50px;top:898.01px;font-size:17.00px;color:#2c2c35;">1</div>
<div class="t" id="p_sur" style="left:819.80px;top:899.31px;font-size:17.00px;color:#2c2c35;transform:scaleX(1.0097);">sur 1</div>
<div class="t" id="p_cour" style="left:1698.91px;top:899.31px;font-size:17.00px;color:#2c2c35;transform:scaleX(1.0873);">Page courante 1 - 6 sur 6</div>
</body></html>
